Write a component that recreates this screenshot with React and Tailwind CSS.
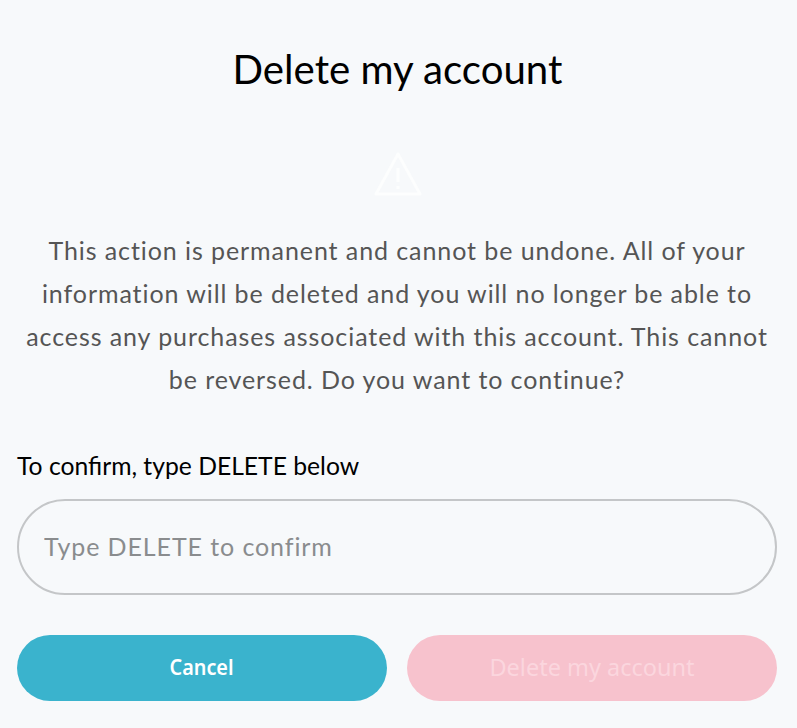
import React from "react";

const App = () => {
  return (
    <div className="w-full h-[728px] bg-[#f7f9fb] overflow-hidden pl-[17px] pr-[20px] pt-[38px] font-['Lato',sans-serif] flex flex-col">
      <h1 className="text-center text-[40.2px] leading-[62px] text-black pl-[1px]">
        Delete my account
      </h1>

      {/* Warning icon, nearly white on the page */}
      <div className="flex justify-center mt-[51px] pl-[1px]">
        <svg width="50" height="46" viewBox="0 0 50 46" fill="none" stroke="#fdfefe" strokeWidth="3" strokeLinejoin="round">
          <path d="M25 3 L47 43 H3 Z" />
          <path d="M25 17 V31" />
          <path d="M25 35 V38" />
        </svg>
      </div>

      <p className="mt-[32px] text-center text-[25px] leading-[43px] tracking-[0.92px] text-[#555555]">
        This action is permanent and cannot be undone. All of your information will be deleted and you will no longer be able to access any purchases associated with this account. This cannot be reversed. Do you want to continue?
      </p>

      <label className="mt-[48px] text-[24.7px] leading-[34px] text-black">
        To confirm, type DELETE below
      </label>

      <input
        placeholder="Type DELETE to confirm"
        className="mt-[16px] w-full h-[96px] shrink-0 rounded-full border-2 border-[#c4c6c8] bg-transparent px-[25px] pb-[2px] text-[25px] tracking-[0.9px] placeholder:text-[#8a8c8e] outline-none"
      />

      <div className="mt-[40px] grid grid-cols-2 gap-5">
        <button className="h-[66px] rounded-full bg-[#3ab3cd] pb-[3px] text-white text-[22px] font-semibold font-['Noto_Sans',sans-serif]">
          <span className="inline-block scale-x-90">Cancel</span>
        </button>
        <button className="h-[66px] rounded-full bg-[#f7c2cd] text-[#fbd6de] text-[23.5px] font-['Noto_Sans',sans-serif]">
          Delete my account
        </button>
      </div>
    </div>
  );
};

export default App;
